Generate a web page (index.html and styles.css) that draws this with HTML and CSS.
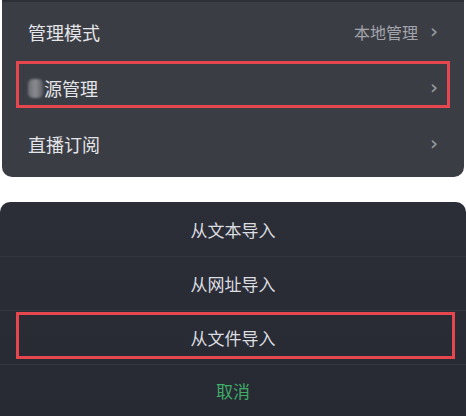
FILE: index.html
```html
<!DOCTYPE html>
<html lang="zh-CN">
<head>
  <meta charset="UTF-8">
  <title>源管理</title>
  <link rel="stylesheet" href="styles.css">
</head>
<body>

  <div class="settings">
    <div class="row">
      <span class="label">管理模式</span>
      <span class="value">本地管理</span>
      <span class="chevron">&#x203A;</span>
    </div>
    <div class="row marked">
      <span class="label"><span class="blur"></span>源管理</span>
      <span class="chevron">&#x203A;</span>
    </div>
    <div class="row">
      <span class="label">直播订阅</span>
      <span class="chevron">&#x203A;</span>
    </div>
  </div>

  <div class="sheet">
    <div class="action">从文本导入</div>
    <div class="action">从网址导入</div>
    <div class="action marked">从文件导入</div>
    <div class="action cancel">取消</div>
  </div>

</body>
</html>
```

FILE: styles.css
```css
body {
  margin: 0;
  background: #fff;
  font-family: "Noto Sans CJK SC", "Noto Sans", sans-serif;
}

.settings {
  margin: 0 2px;
  height: 177px;
  padding-top: 2px;
  box-sizing: border-box;
  background: #3b3d45;
  border-radius: 0 0 10px 10px;
  border-top: 2px solid #2e3037;
}

.row {
  position: relative;
  display: flex;
  align-items: center;
  height: 56px;
  padding: 0 26px 0 26px;
  color: #e4e5e8;
  font-size: 18px;
}

.label {
  flex: 1;
  display: flex;
  align-items: center;
}

.value {
  color: #a3a5ab;
  font-size: 16px;
  margin-right: 12px;
}

.chevron {
  color: #9a9ca3;
  font-size: 20px;
  font-family: "DejaVu Sans", sans-serif;
  line-height: 1;
  margin-top: -3px;
}

.blur {
  display: inline-block;
  width: 15px;
  height: 19px;
  border-radius: 5px;
  margin-right: 1px;
  background: linear-gradient(90deg, #6b6d73, #8a8b90 50%, #5c5e65);
  filter: blur(1px);
}

.marked::after {
  content: "";
  position: absolute;
  left: 14px;
  right: 14px;
  top: 1px;
  bottom: 8px;
  border: 3px solid #e6474f;
}

.sheet {
  margin-top: 25px;
  height: 214px;
  background: linear-gradient(180deg, #2b2e36, #272a33);
  border-radius: 10px 10px 0 0;
}

.action {
  position: relative;
  display: flex;
  align-items: center;
  justify-content: center;
  height: 53px;
  color: #dcdde1;
  font-size: 17px;
  border-bottom: 1px solid #343741;
}

.action:first-child {
  height: 54px;
}

.action.marked::after {
  left: 16px;
  right: 11px;
  top: 1px;
  bottom: 5px;
}

.action.cancel {
  border-bottom: none;
  height: 50px;
  color: #3fac68;
}
```
